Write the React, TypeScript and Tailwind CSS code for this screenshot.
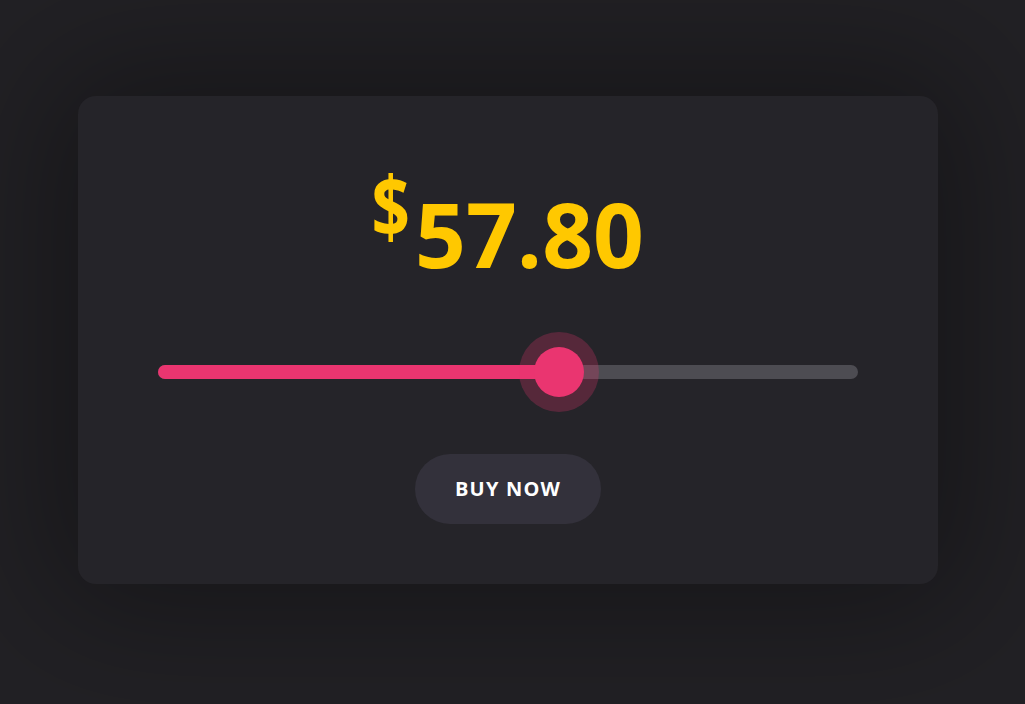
import React, { useState } from "react";

export default function App() {
  const [value] = useState(57.8);
  const frac = value / 100;
  const thumb = 50;
  const trackW = 700;
  const center = frac * (trackW - thumb) + thumb / 2;
  return (
    <div
      className="w-[1025px] h-[704px] bg-[#222125] pt-[96px] pl-[78px]"
      style={{ fontFamily: '"Open Sans", "Noto Sans", sans-serif' }}
    >
      <div className="w-[860px] h-[488px] rounded-[18px] bg-[#252429] shadow-[0_0_140px_30px_rgba(0,0,0,0.35)] flex flex-col items-center pt-[64px]">
        <div className="flex items-start text-[#ffc800] font-bold h-[130px]">
          <span className="inline-block text-[84px] leading-none mt-[3px] scale-x-[0.8] origin-right -ml-[10px] mr-[5px]">$</span>
          <span className="text-[89px] leading-none mt-[29px] tracking-[0px]">57.80</span>
        </div>
        <div className="relative w-[700px] h-[80px] mt-[42px]">
          <div className="absolute left-0 right-0 top-[33px] h-[14px] rounded-full bg-[#4d4c52]" />
          <div
            className="absolute left-0 top-[33px] h-[14px] rounded-full bg-[#ea3570]"
            style={{ width: center }}
          />
          <div
            className="absolute top-0 w-[80px] h-[80px] rounded-full bg-[#ea3570]/25 flex items-center justify-center"
            style={{ left: center - 40 }}
          >
            <div className="w-[50px] h-[50px] rounded-full bg-[#ea3570]" />
          </div>
        </div>
        <button className="mt-[42px] w-[186px] h-[70px] rounded-full bg-[#33313b] text-white font-bold text-[20px] tracking-[1.2px]">
          BUY NOW
        </button>
      </div>
    </div>
  );
}
